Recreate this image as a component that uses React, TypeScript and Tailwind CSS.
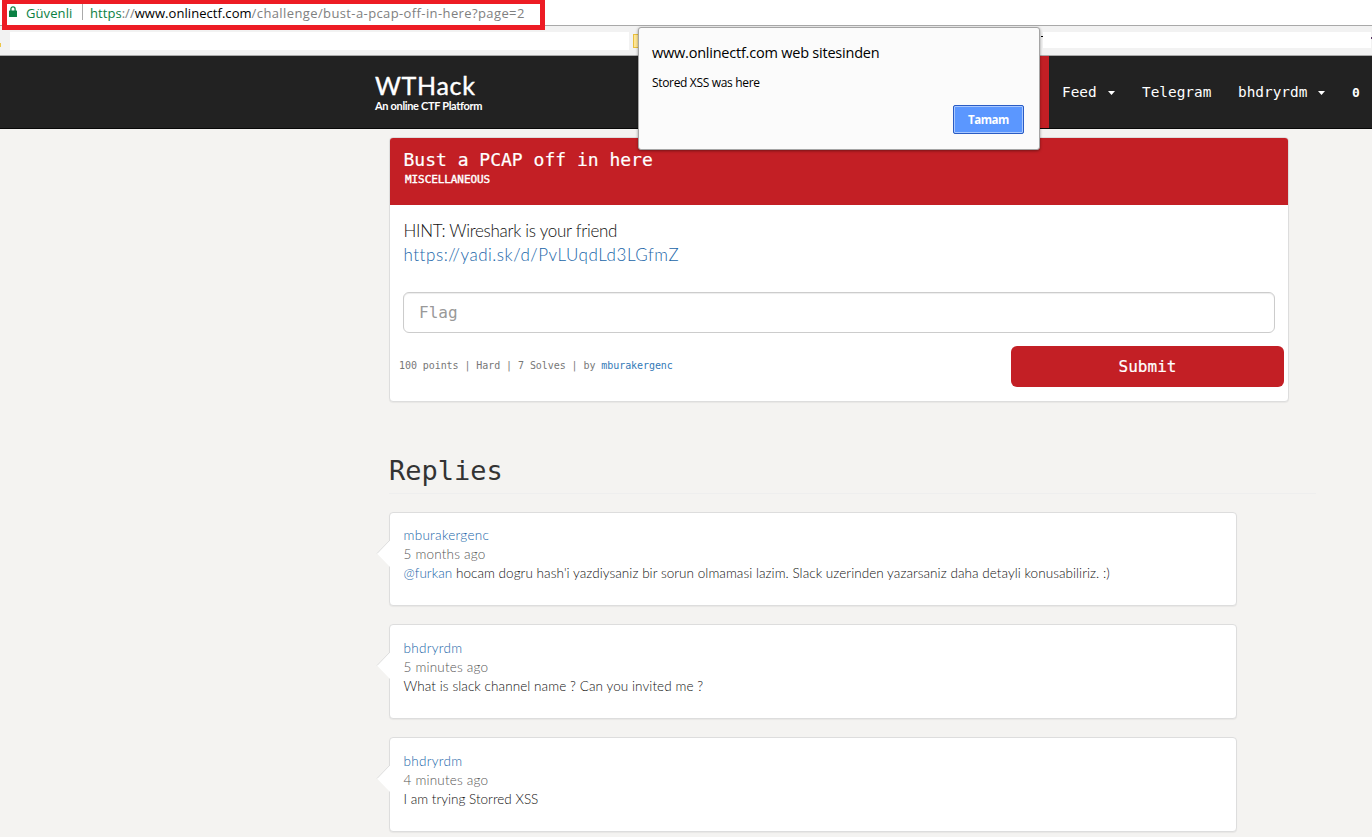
import type { ReactNode } from "react";

function Line({ children, className }: { children: ReactNode; className: string }) {
  return <span className={`block w-max whitespace-nowrap ${className}`}>{children}</span>;
}

function BrowserBar() {
  return (
    <div className="font-['Open_Sans',sans-serif]">
      <div className="flex h-[26px] items-start border-b border-[#a9a9a9] bg-white pl-[9px]">
        <svg width="8" height="12" viewBox="0 0 8 12" className="mt-[6px] shrink-0">
          <path d="M1.9 5V2.9a2.1 2.1 0 0 1 4.2 0V5" fill="none" stroke="#0b8043" strokeWidth="1.3" />
          <rect x="0" y="4.4" width="8" height="6.6" rx="0.6" fill="#0b8043" />
        </svg>
        <span className="ml-[9px] mt-[3px] w-[56px] text-[13px] leading-[20px] tracking-[0.1px] text-[#0b8043]">Güvenli</span>
        <span className="mt-[4px] h-4 w-px bg-[#aaa]" />
        <span className="ml-[7px] mt-[3px] whitespace-nowrap text-[13px] leading-[20px] tracking-[0.05px] text-[#808080]">
          <span className="text-[#0b8043]">https</span>://<span className="text-black">www.onlinectf.com</span>
          <span className="tracking-[0.39px]">/challenge/bust-a-pcap-off-in-here?page=2</span>
        </span>
      </div>
      <div className="flex h-[30px] items-start border-b border-[#aaa] bg-[#f2f2f2] pt-[6px]">
        <span className="mt-[11px] h-[4px] w-px bg-[#edc647]" />
        <span className="ml-[9px] h-[18px] w-[619px] bg-white" />
        <span className="ml-[4px] mt-[2px] h-[14px] w-[12px] border border-[#e8bf3d] bg-[#ffe694]" />
        <span className="ml-[396px] mt-[4px] h-px w-[2px] bg-black" />
        <span className="h-4 w-[328px] bg-white" />
        <span className="mt-[5px] h-[2px] w-px bg-[#5b3a66]" />
      </div>
    </div>
  );
}

function Caret() {
  return (
    <svg width="7" height="4" viewBox="0 0 7 4" className="mt-px shrink-0">
      <path d="M0 0h7L3.5 4z" fill="#fff" />
    </svg>
  );
}

function Nav() {
  return (
    <nav className="flex h-[73px] border-b border-[#080808] bg-[#222] text-white">
      <div className="ml-[375px] w-[110px] pt-[13px] font-['Lato',sans-serif]">
        <Line className="text-[25px] leading-[32px] tracking-[0.7px] [-webkit-text-stroke:0.4px_white]">WTHack</Line>
        <Line className="mt-[-2px] text-[11px] font-bold leading-[14px] tracking-[-0.33px]">An online CTF Platform</Line>
      </div>
      <div className="ml-[515px] w-[49px] bg-[#c31f25]" />
      <div className="flex items-center pt-[2px] font-['DejaVu_Sans_Mono',monospace] text-[14.4px]">
        <div className="ml-[13px] flex w-[80px] items-center gap-[11px]">Feed<Caret /></div>
        <div className="w-[96px]">Telegram</div>
        <div className="flex w-[114px] items-center gap-[11px]">bhdryrdm<Caret /></div>
        <div className="text-[13px] font-bold">0</div>
      </div>
    </nav>
  );
}

function ChallengeCard() {
  return (
    <section className="h-[265px] w-[900px] rounded-[4px] border border-[#ddd] bg-white shadow-[0_1px_1px_rgba(0,0,0,0.05)]">
      <header className="h-[67px] rounded-t-[3px] bg-[#c31f25] pl-[13.5px] pt-[10px] font-['DejaVu_Sans_Mono',monospace] text-white">
        <Line className="text-[18px] leading-[24px] [-webkit-text-stroke:0.2px_white]">Bust a PCAP off in here</Line>
        <Line className="pl-[1.5px] text-[11px] leading-[15px] tracking-[-0.08px] [-webkit-text-stroke:0.4px_white]">MISCELLANEOUS</Line>
      </header>
      <div className="h-[87px] pl-[13.5px] pt-[14px] font-['Lato',sans-serif] text-[17px] font-light leading-[24px]">
        <Line className="tracking-[-0.28px] text-[#111]">HINT: Wireshark is your friend</Line>
        <Line className="tracking-[0.53px] text-[#1965a8]">https://yadi.sk/d/PvLUqdLd3LGfmZ</Line>
      </div>
      <div className="font-['DejaVu_Sans_Mono',monospace]">
        <input
          className="ml-[13px] block h-[41px] w-[872px] rounded-[6px] border border-[#ccc] px-[15px] text-[16px] shadow-[inset_0_1px_1px_rgba(0,0,0,0.075)] outline-none placeholder:text-[#999]"
          placeholder="Flag"
        />
        <div className="mt-[13px] flex justify-between pl-[9px] pr-[4px]">
          <Line className="mt-[12px] text-[10px] leading-[16px] tracking-[-0.07px] text-[#777]">
            100 points | Hard | 7 Solves | by <span className="text-[#337ab7]">mburakergenc</span>
          </Line>
          <button className="h-[41px] w-[273px] rounded-[6px] bg-[#c31f25] text-[16px] text-white [-webkit-text-stroke:0.2px_white]">Submit</button>
        </div>
      </div>
    </section>
  );
}

interface ReplyProps {
  user: string;
  time: string;
  box: string;
  spacing: string;
  children: ReactNode;
}

function Reply({ user, time, box, spacing, children }: ReplyProps) {
  return (
    <article
      className={`relative w-[848px] rounded-[4px] border border-[#ddd] bg-white pl-[13.5px] font-['Lato',sans-serif] text-[13.5px] font-light leading-[19px] text-[#111] shadow-[0_1px_1px_rgba(0,0,0,0.05)] ${box}`}
    >
      <svg width="14" height="28" viewBox="0 0 14 28" className="absolute -left-[14px] top-[27px]">
        <path d="M14 0L1 13.5L14 27z" fill="#fff" />
        <path d="M14 0L1 13.5" fill="none" stroke="#ddd" />
      </svg>
      <Line className="tracking-[0.3px] text-[#1965a8]">{user}</Line>
      <Line className="tracking-[0.2px] text-[#555]">{time}</Line>
      <div className={`w-max ${spacing}`}>{children}</div>
    </article>
  );
}

function AlertDialog() {
  return (
    <div
      role="alertdialog"
      className="absolute left-[638px] top-[27px] flex h-[123px] w-[402px] flex-col rounded-[3px] border border-[#a5a5a5] bg-[#fbfbfb] pl-[13px] pt-[14px] font-['Open_Sans',sans-serif] text-black shadow-[0_1px_3px_rgba(0,0,0,0.4)]"
    >
      <Line className="text-[14.5px] leading-[22px] tracking-[-0.22px]">www.onlinectf.com web sitesinden</Line>
      <Line className="mt-[10px] text-[12px] leading-[18px] tracking-[-0.33px]">Stored XSS was here</Line>
      <button className="ml-[301px] mt-[13px] h-[29px] w-[71px] rounded-[2px] border border-[#2a5cc4] bg-[#5b97ff] text-[11.5px] font-bold leading-[24px] tracking-[-0.45px] text-white shadow-[inset_0_0_0_1px_#a9c8ff]">
        Tamam
      </button>
    </div>
  );
}

export default function App() {
  return (
    <div className="relative h-[837px] w-[1372px] overflow-hidden bg-[#f4f3f1]">
      <BrowserBar />
      <Nav />
      <main className="ml-[389px] mt-[8px]">
        <ChallengeCard />
        <h2 className="mt-[49px] h-[43px] w-[927px] border-b border-[#eee] font-['DejaVu_Sans_Mono',monospace] text-[27px] leading-[40px] text-[#333]">
          Replies
        </h2>
        <div className="mt-[18px] flex flex-col gap-[18px]">
          <Reply user="mburakergenc" time="5 months ago" box="h-[94px] pt-[13px]" spacing="tracking-[0.05px]">
            <span className="text-[#1965a8]">@furkan</span> hocam dogru hash'i yazdiysaniz bir sorun olmamasi lazim. Slack uzerinden yazarsaniz daha detayli konusabiliriz. :)
          </Reply>
          <Reply user="bhdryrdm" time="5 minutes ago" box="h-[95px] pt-[14px]" spacing="tracking-[0.08px]">
            What is slack channel name ? Can you invited me ?
          </Reply>
          <Reply user="bhdryrdm" time="4 minutes ago" box="h-[95px] pt-[14px]" spacing="tracking-[0.01px]">
            I am trying Storred XSS
          </Reply>
        </div>
      </main>
      <AlertDialog />
      <div className="pointer-events-none absolute left-[2px] top-0 h-[30px] w-[543px] border-[5px] border-t-4 border-[#ed1c24]" />
    </div>
  );
}
